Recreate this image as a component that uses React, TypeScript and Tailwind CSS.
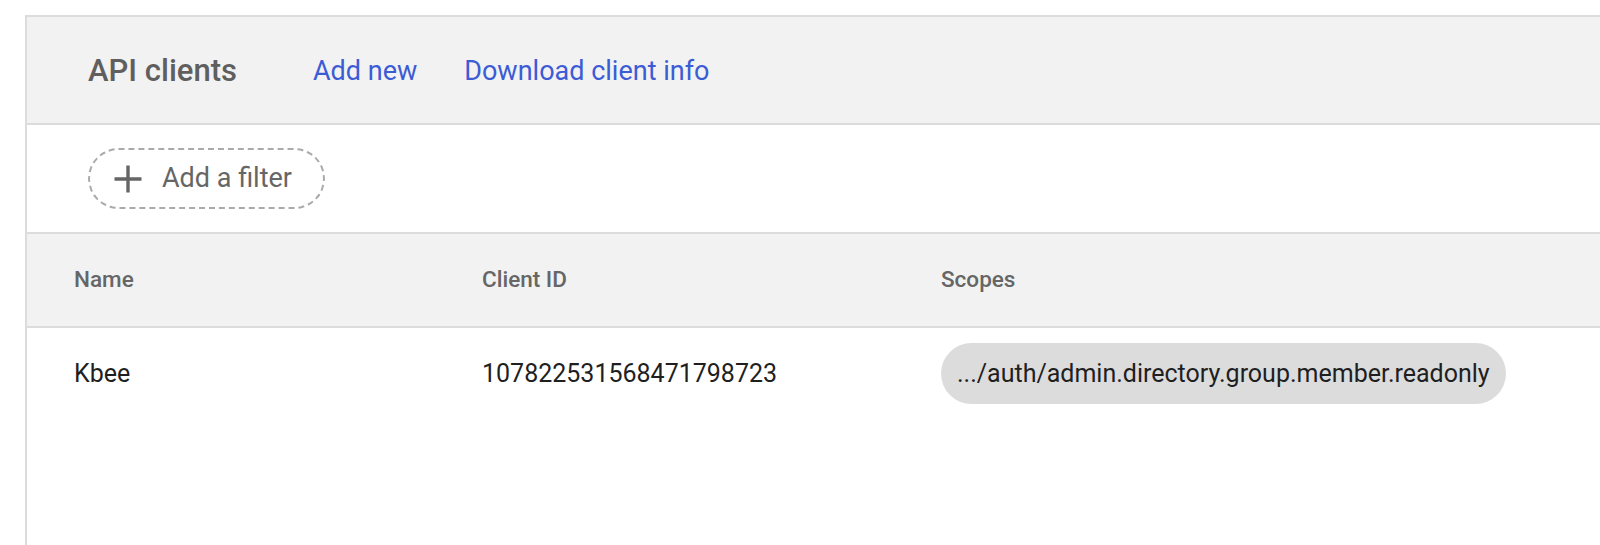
import React from "react";

const font = { fontFamily: "Roboto, 'Liberation Sans', sans-serif" };

const clients = [
  {
    name: "Kbee",
    id: "107822531568471798723",
    scopes: [".../auth/admin.directory.group.member.readonly"],
  },
];

export default function App() {
  return (
    <div className="w-[1600px] h-[545px] overflow-hidden bg-white pt-[15px] pl-[25px]" style={font}>
      <div className="w-[1600px] h-[600px] border-l-2 border-t-2 border-[#dcdcdc]">
        {/* header */}
        <div className="h-[108px] flex items-center bg-[#f2f2f2] border-b-2 border-[#dcdcdc] pl-[61px] pt-[3px]">
          <h1 className="text-[31px] font-medium text-[#5f5f5f] mr-[76px]">API clients</h1>
          <a className="text-[27px] text-[#3c5cd6] mr-[47px]">Add new</a>
          <a className="text-[27px] text-[#3c5cd6]">Download client info</a>
        </div>

        {/* filter bar */}
        <div className="h-[109px] flex items-center pl-[61px] border-b-2 border-[#dcdcdc]">
          <button className="h-[61px] w-[237px] rounded-full border-2 border-dashed border-[#aaaaaa] flex items-center pl-[24px] text-[#666666]">
            <svg width="28" height="28" viewBox="0 0 28 28" className="mr-[20px] shrink-0">
              <path d="M14 0.5v27M0.5 14h27" stroke="#666666" strokeWidth="3.4" />
            </svg>
            <span className="text-[27px] whitespace-nowrap">Add a filter</span>
          </button>
        </div>

        {/* table */}
        <div className="h-[94px] flex items-center bg-[#f2f2f2] border-b-2 border-[#dcdcdc] pl-[47px] text-[22.5px] font-medium text-[#666666]">
          <div className="w-[408px]">Name</div>
          <div className="w-[459px]">Client ID</div>
          <div>Scopes</div>
        </div>
        {clients.map((c) => (
          <div key={c.id} className="flex items-center pl-[47px] pt-[15px] text-[25px] text-[#1f1f1f]">
            <div className="w-[408px]">{c.name}</div>
            <div className="w-[459px]">{c.id}</div>
            <div className="flex gap-2">
              {c.scopes.map((s) => (
                <span key={s} className="h-[61px] flex items-center rounded-full bg-[#dcdcdc] px-[16px]">
                  {s}
                </span>
              ))}
            </div>
          </div>
        ))}
      </div>
    </div>
  );
}
